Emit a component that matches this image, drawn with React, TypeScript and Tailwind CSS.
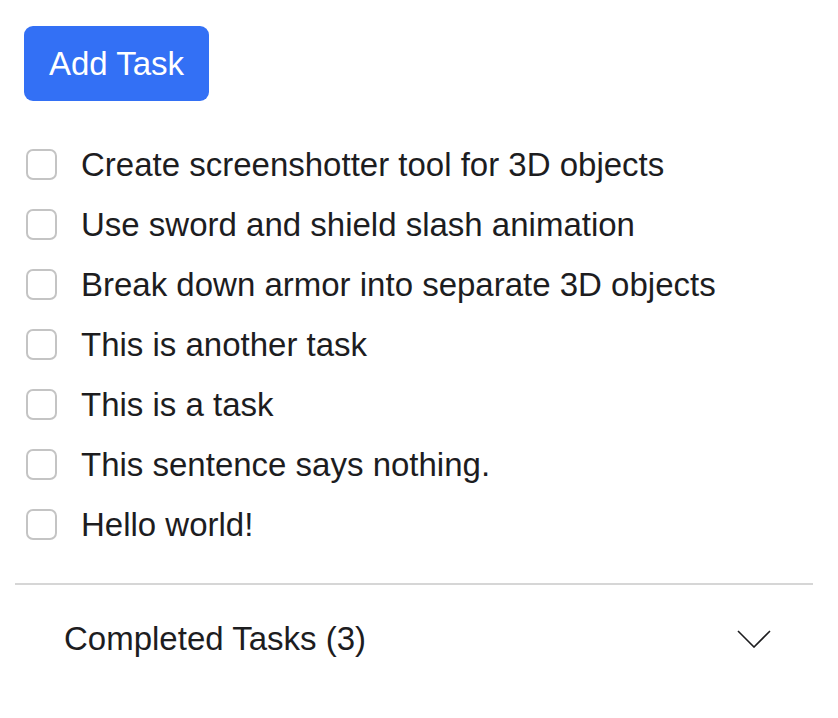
import React from 'react';

const tasks = [
  'Create screenshotter tool for 3D objects',
  'Use sword and shield slash animation',
  'Break down armor into separate 3D objects',
  'This is another task',
  'This is a task',
  'This sentence says nothing.',
  'Hello world!',
];

export default function App() {
  return (
    <div className="w-[838px] h-[718px] bg-white text-[#1d1d1f] font-['Liberation_Sans',Arial,sans-serif]">
      <div className="pt-[26px] pl-[24px]">
        <button className="h-[75px] w-[185px] rounded-[9px] bg-[#3370f5] text-white text-[33px]">
          Add Task
        </button>
      </div>

      <ul className="mt-[48px] pl-[26px] flex flex-col gap-[29px]">
        {tasks.map((t) => (
          <li key={t} className="flex items-center h-[31px]">
            <span className="w-[31px] h-[31px] rounded-[7px] border-2 border-[#c4c4c4] bg-white shrink-0" />
            <span className="ml-[24px] text-[33px] leading-none">{t}</span>
          </li>
        ))}
      </ul>

      <div className="mt-[43px] ml-[15px] mr-[25px] border-t-2 border-[#d6d6d6]" />

      <div className="flex items-center justify-between pl-[64px] pr-[67px] h-[108px]">
        <span className="text-[33px]">Completed Tasks (3)</span>
        <svg width="34" height="18" viewBox="0 0 34 18" fill="none" stroke="#1d1d1f" strokeWidth="1.6">
          <path d="M1 1 L17 17 L33 1" />
        </svg>
      </div>
    </div>
  );
}
